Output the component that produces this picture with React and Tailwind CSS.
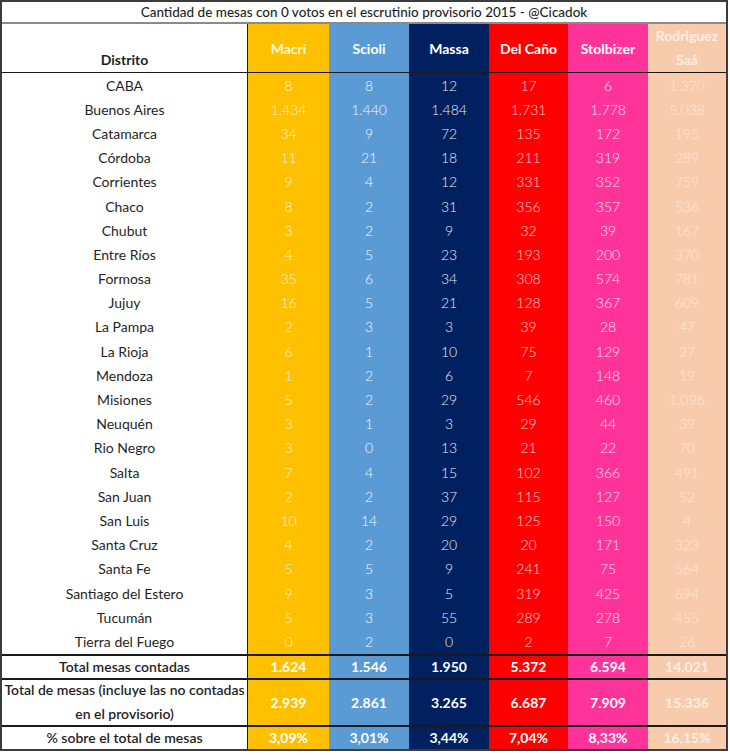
const rows = [
  ["CABA", "8", "8", "12", "17", "6", "1.370"],
  ["Buenos Aires", "1.434", "1.440", "1.484", "1.731", "1.778", "5.038"],
  ["Catamarca", "34", "9", "72", "135", "172", "195"],
  ["Córdoba", "11", "21", "18", "211", "319", "289"],
  ["Corrientes", "9", "4", "12", "331", "352", "759"],
  ["Chaco", "8", "2", "31", "356", "357", "536"],
  ["Chubut", "3", "2", "9", "32", "39", "167"],
  ["Entre Ríos", "4", "5", "23", "193", "200", "370"],
  ["Formosa", "35", "6", "34", "308", "574", "781"],
  ["Jujuy", "16", "5", "21", "128", "367", "609"],
  ["La Pampa", "2", "3", "3", "39", "28", "47"],
  ["La Rioja", "6", "1", "10", "75", "129", "27"],
  ["Mendoza", "1", "2", "6", "7", "148", "19"],
  ["Misiones", "5", "2", "29", "546", "460", "1.096"],
  ["Neuquén", "3", "1", "3", "29", "44", "39"],
  ["Rio Negro", "3", "0", "13", "21", "22", "70"],
  ["Salta", "7", "4", "15", "102", "366", "491"],
  ["San Juan", "2", "2", "37", "115", "127", "52"],
  ["San Luis", "10", "14", "29", "125", "150", "4"],
  ["Santa Cruz", "4", "2", "20", "20", "171", "323"],
  ["Santa Fe", "5", "5", "9", "241", "75", "564"],
  ["Santiago del Estero", "9", "3", "5", "319", "425", "694"],
  ["Tucumán", "5", "3", "55", "289", "278", "455"],
  ["Tierra del Fuego", "0", "2", "0", "2", "7", "26"],
];

// fondo, texto de datos, texto de totales, ancho
const cols = [
  { bg: "bg-[#ffc000]", data: "text-[#fff4cf]", bold: "text-white", w: "w-[81px]" },
  { bg: "bg-[#5b9bd5]", data: "text-[#f2f7fc]", bold: "text-white", w: "w-[80px]" },
  { bg: "bg-[#002060]", data: "text-[#e6ebf5]", bold: "text-white", w: "w-[80px]" },
  { bg: "bg-[#ff0000]", data: "text-[#ffd6d6]", bold: "text-white", w: "w-[79px]" },
  { bg: "bg-[#ff3399]", data: "text-[#ffe0ef]", bold: "text-white", w: "w-[80px]" },
  { bg: "bg-[#f8cbad]", data: "text-[#fde9dc]", bold: "text-[#fdeee4]", w: "w-[78px]" },
];

const totals = [
  { label: "Total mesas contadas", h: "h-[24px]", values: ["1.624", "1.546", "1.950", "5.372", "6.594", "14.021"] },
  {
    label: (
      <>
        Total de mesas (incluye las no contadas
        <br />
        en el provisorio)
      </>
    ),
    h: "h-[47px]",
    values: ["2.939", "2.861", "3.265", "6.687", "7.909", "15.336"],
  },
  { label: "% sobre el total de mesas", h: "h-[24px]", values: ["3,09%", "3,01%", "3,44%", "7,04%", "8,33%", "16,15%"] },
];

export default function App() {
  return (
    <div className="w-[730px] h-[755px] bg-white font-['Lato','Liberation_Sans',sans-serif] text-[#1f1f1f]">
      <div className="w-[728px] border-2 border-[#3c3c3c]">
        {/* Titulo */}
        <div className="h-[22px] flex items-center justify-center border-b-2 border-[#8a8a8a] text-[13.5px] font-medium">
          Cantidad de mesas con 0 votos en el escrutinio provisorio 2015 - @Cicadok
        </div>

        {/* Encabezado */}
        <div className="flex h-[49px] border-b border-[#1a1a1a]">
          <div className="w-[246px] border-r border-[#1a1a1a] flex items-end justify-center pb-[2px] text-[14px] font-bold">
            Distrito
          </div>
          {["Macri", "Scioli", "Massa", "Del Caño", "Stolbizer"].map((name, i) => (
            <div
              key={name}
              className={`${cols[i].bg} ${cols[i].w} ${i === 0 ? "text-[#fff6dc]" : "text-white"} flex items-center justify-center text-[14px] font-bold`}
            >
              {name}
            </div>
          ))}
          <div className={`${cols[5].bg} ${cols[5].w} text-[#fdeee4] flex flex-col items-center justify-center text-[14px] font-bold leading-[24px]`}>
            <span>Rodriguez</span>
            <span>Saá</span>
          </div>
        </div>

        {/* Filas */}
        {rows.map((r) => (
          <div key={r[0]} className="flex h-[24.2px]">
            <div className="w-[246px] border-r border-[#1a1a1a] flex items-center justify-center text-[14px]">
              {r[0]}
            </div>
            {r.slice(1).map((v, i) => (
              <div
                key={i}
                className={`${cols[i].bg} ${cols[i].w} ${cols[i].data} flex items-center justify-center text-[14px] font-light`}
              >
                {v}
              </div>
            ))}
          </div>
        ))}

        {/* Totales */}
        {totals.map((t, k) => (
          <div key={k} className={`flex ${t.h} border-t-2 border-[#1a1a1a]`}>
            <div className="w-[246px] border-r border-[#1a1a1a] flex items-center justify-center text-center text-[14px] font-semibold leading-[24px]">
              <span>{t.label}</span>
            </div>
            {t.values.map((v, i) => (
              <div
                key={i}
                className={`${cols[i].bg} ${cols[i].w} ${cols[i].bold} flex items-center justify-center text-[14px] font-bold`}
              >
                {v}
              </div>
            ))}
          </div>
        ))}
      </div>
    </div>
  );
}
